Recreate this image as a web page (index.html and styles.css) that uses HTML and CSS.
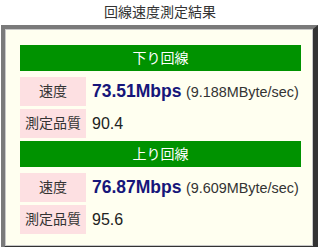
FILE: index.html
```html
<!DOCTYPE html>
<html lang="ja">
<head>
    <meta charset="UTF-8">
    <title>回線速度測定結果</title>
    <link rel="stylesheet" href="styles.css">
</head>
<body>
<h1 class="title">回線速度測定結果</h1>

<div class="result">
    <div class="head">下り回線</div>
    <div class="label">速度</div>
    <div class="value"><b class="speed">73.51Mbps</b> <span class="bytes">(9.188MByte/sec)</span></div>
    <div class="label">測定品質</div>
    <div class="value">90.4</div>

    <div class="head">上り回線</div>
    <div class="label">速度</div>
    <div class="value"><b class="speed">76.87Mbps</b> <span class="bytes">(9.609MByte/sec)</span></div>
    <div class="label">測定品質</div>
    <div class="value">95.6</div>
</div>
</body>
</html>
```

FILE: styles.css
```css
* {
    margin: 0;
    padding: 0;
    box-sizing: border-box;
}

body {
    background: #fff;
    color: #222;
    font-family: "Liberation Sans", "Noto Sans CJK JP", sans-serif;
}

.title {
    height: 25px;
    line-height: 24px;
    text-align: center;
    font-size: 14px;
    font-weight: normal;
    color: #333;
}

.result {
    display: grid;
    grid-template-columns: 66px 1fr;
    grid-auto-rows: 29px;
    gap: 3px 2px;
    margin: 0 2px 0 1px;
    padding: 16px 12px 12px 15px;
    background: #fffff0;
    border-style: solid;
    border-width: 4px 5px 7px 4px;
    border-color: #7a7a7a #333 #333 #7a7a7a;
    box-shadow: inset 0 0 0 1px #c8c8c8;
}

.head {
    grid-column: 1 / 3;
    height: 26px;
    line-height: 26px;
    text-align: center;
    background: #009200;
    color: #fff;
    font-size: 14px;
}

.label {
    background: #fde0e2;
    text-align: center;
    line-height: 29px;
    font-size: 14px;
    color: #333;
}

.value {
    padding-left: 4px;
    line-height: 29px;
    font-size: 16px;
    color: #222;
    white-space: nowrap;
}

.speed {
    font-size: 17.5px;
    color: #16167a;
}

.bytes {
    font-size: 14.4px;
    color: #333;
}
```
